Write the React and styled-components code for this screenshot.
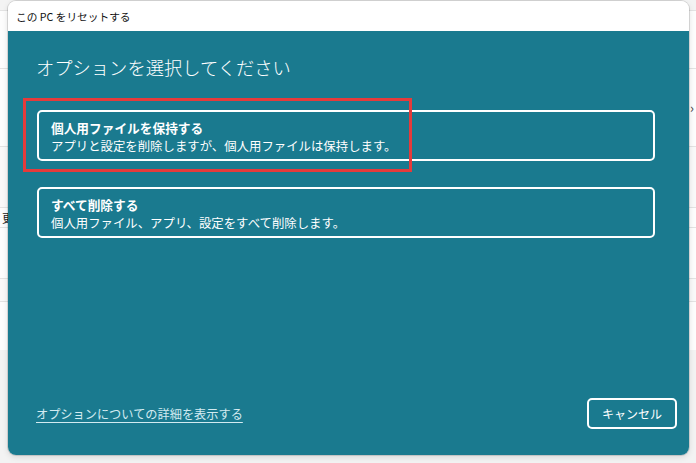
import React from 'react';
import styled, { createGlobalStyle } from 'styled-components';

const GlobalStyle = createGlobalStyle`
  html, body {
    margin: 0;
    padding: 0;
    background: #f3f3f3;
  }
  body {
    font-family: "Noto Sans CJK JP", "Noto Sans", sans-serif;
    overflow: hidden;
  }
`;

const Screen = styled.div`
  position: relative;
  width: 696px;
  height: 463px;
  overflow: hidden;
  background: #f3f3f3;
`;

// settings page sitting behind the dialog
const Backdrop = styled.div`
  display: flex;
  flex-direction: column;
  padding-top: 10px;
`;

const BackRow = styled.div`
  height: ${p => p.h}px;
  background: ${p => (p.shade ? '#f9f9f9' : '#fdfdfd')};
  border-top: 1px solid #e3e3e3;
  display: flex;
  align-items: center;
  justify-content: space-between;
  padding: 0 2px;
  font-size: 12px;
  color: #222;
`;

const Chevron = styled.span`
  font-size: 13px;
  color: #444;
`;

const Window = styled.div`
  position: absolute;
  left: 8px;
  top: 1px;
  width: 681px;
  height: 454px;
  border-radius: 8px;
  overflow: hidden;
  display: flex;
  flex-direction: column;
  box-shadow: 0 0 0 1px rgba(0, 0, 0, 0.12), 0 2px 6px rgba(0, 0, 0, 0.12);
`;

const TitleBar = styled.div`
  height: 30px;
  background: #ffffff;
  display: flex;
  align-items: center;
  padding-left: 8px;
  font-size: 10.7px;
  color: #111;
  flex-shrink: 0;
`;

const Body = styled.div`
  flex: 1;
  background: #1a7a8f;
  color: #ffffff;
  display: flex;
  flex-direction: column;
  padding: 24px 12px 26px 28px;
`;

const Heading = styled.h1`
  margin: 0 0 31px;
  font-size: 18.3px;
  line-height: 24px;
  font-weight: 300;
  letter-spacing: 0;
`;

const OptionList = styled.div`
  display: flex;
  flex-direction: column;
  gap: 26px;
  width: 618px;
  margin-left: 1px;
`;

const OptionCard = styled.div`
  position: relative;
  border: 2px solid #ffffff;
  border-radius: 5px;
  padding: 6px 12px 3px;
  line-height: 19px;
`;

const OptionTitle = styled.div`
  font-size: 12.7px;
  font-weight: 700;
`;

const OptionText = styled.div`
  font-size: 12.4px;
  font-weight: 400;
`;

const Highlight = styled.div`
  position: absolute;
  left: -16px;
  top: -14px;
  width: 383px;
  height: 68px;
  border: 3px solid #e53b3b;
  pointer-events: none;
`;

const Footer = styled.div`
  margin-top: auto;
  display: flex;
  align-items: center;
  justify-content: space-between;
`;

const MoreLink = styled.a`
  color: #d3ebf1;
  font-size: 12.2px;
  text-decoration: underline;
  text-underline-offset: 3px;
  cursor: pointer;
`;

const CancelButton = styled.button`
  width: 90px;
  height: 31px;
  border: 2px solid #ffffff;
  border-radius: 5px;
  background: transparent;
  color: #ffffff;
  font-family: inherit;
  font-size: 12px;
  padding: 0;
  cursor: pointer;
`;

const backRows = [
  { h: 57 },
  { h: 77 },
  { h: 60, shade: true },
  { h: 19 },
  { h: 50 },
  { h: 22, shade: true },
  { h: 48 },
];

export default function App() {
  return (
    <Screen>
      <GlobalStyle />
      <Backdrop>
        {backRows.map((r, i) => (
          <BackRow key={i} h={r.h} shade={r.shade}>
            <span>{i === 3 ? '更' : ''}</span>
            {i === 1 && <Chevron>›</Chevron>}
          </BackRow>
        ))}
      </Backdrop>

      <Window>
        <TitleBar>この PC をリセットする</TitleBar>
        <Body>
          <Heading>オプションを選択してください</Heading>
          <OptionList>
            <OptionCard>
              <Highlight />
              <OptionTitle>個人用ファイルを保持する</OptionTitle>
              <OptionText>アプリと設定を削除しますが、個人用ファイルは保持します。</OptionText>
            </OptionCard>
            <OptionCard>
              <OptionTitle>すべて削除する</OptionTitle>
              <OptionText>個人用ファイル、アプリ、設定をすべて削除します。</OptionText>
            </OptionCard>
          </OptionList>
          <Footer>
            <MoreLink>オプションについての詳細を表示する</MoreLink>
            <CancelButton>キャンセル</CancelButton>
          </Footer>
        </Body>
      </Window>
    </Screen>
  );
}
